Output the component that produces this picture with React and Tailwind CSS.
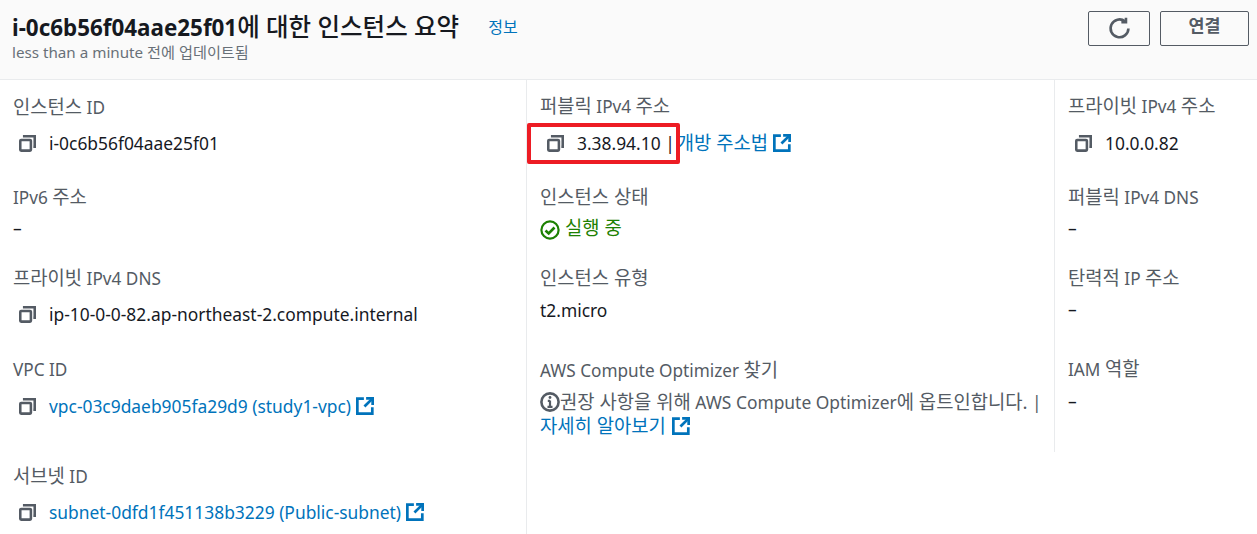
const CopyIcon = () => (
    <svg viewBox="0 0 16 16" className="w-[17px] h-[17px] shrink-0" fill="none" stroke="#545b64" strokeWidth="2.4">
        <rect x="1.2" y="4.7" width="10" height="10" rx="0.8" />
        <path d="M4.9 2.4V1.2h9.9v9.9h-1.3" />
    </svg>
);

const ExternalIcon = () => (
    <svg viewBox="0 0 16 16" className="w-[18px] h-[18px] shrink-0 inline-block" fill="none" stroke="#0073bb" strokeWidth="2.4">
        <path d="M7 1.5H1.2v13.3h13.3V9" />
        <path d="M9 1.2h5.8V7" />
        <path d="M14.8 1.2L7.5 8.5" />
    </svg>
);

// korean glyphs sit larger than the latin ones in the reference
const K = ({ children }) => <span className="text-[18.8px]">{children}</span>;

const Label = ({ children }) => <div className="text-[#545b64] text-[17.2px] h-[22px] leading-[22px]">{children}</div>;

const Copyable = ({ children, link }) => (
    <div className="flex items-center h-[22px] mt-[14px] pl-[6px]">
        <CopyIcon />
        <span className={`ml-[13px] flex items-center gap-[5px] ${link ? "text-[#0073bb]" : "text-[#16191f]"}`}>
            {children}
            {link && <ExternalIcon />}
        </span>
    </div>
);

const Plain = ({ children }) => <div className="h-[22px] leading-[22px] mt-[9px] text-[#16191f]">{children}</div>;

export default function App() {
    return (
        <div className="w-[1257px] h-[534px] overflow-hidden bg-white text-[17.4px] relative font-['Noto_Sans','Noto_Sans_CJK_KR',sans-serif]">

            {/* Header */}
            <div className="h-[80px] bg-[#fafafa] border-b border-[#e9ebed] flex justify-between pl-[12px] pr-[8px] pt-[11px]">
                <div>
                    <div className="flex items-center h-[32px]">
                        <h1 className="text-[22.4px] font-bold text-[#16191f] leading-[32px]">
                            i-0c6b56f04aae25f01<span className="font-medium text-[24.5px]">에 대한 인스턴스 요약</span>
                        </h1>
                        <span className="ml-[29px] text-[16px] text-[#0073bb]">정보</span>
                    </div>
                    <div className="text-[15.2px] leading-[18px] text-[#687078]">less than a minute 전에 업데이트됨</div>
                </div>
                <div className="flex gap-[10px]">
                    <button className="w-[62px] h-[35px] border border-[#545b64] rounded-[2px] flex items-center justify-center">
                        <svg viewBox="0 0 16 16" className="w-[23px] h-[23px]" fill="none" stroke="#545b64" strokeWidth="1.8">
                            <path d="M14.2 8A6.2 6.2 0 1 1 11.8 3" />
                            <path d="M12.5 0.5v3.2H9.3" />
                        </svg>
                    </button>
                    <button className="w-[89px] h-[35px] border border-[#545b64] rounded-[2px] text-[#545b64] font-bold pb-[6px]">연결</button>
                </div>
            </div>

            {/* Columns */}
            <div className="flex">
                <div className="w-[527px] h-[454px] border-r border-[#e9ebed] pl-[13px] pt-[16px]">
                    <Label><K>인스턴스</K> ID</Label>
                    <Copyable>i-0c6b56f04aae25f01</Copyable>

                    <div className="mt-[32px]"><Label>IPv6 <K>주소</K></Label></div>
                    <Plain>–</Plain>

                    <div className="mt-[28px]"><Label><K>프라이빗</K> IPv4 DNS</Label></div>
                    <Copyable>ip-10-0-0-82.ap-northeast-2.compute.internal</Copyable>

                    <div className="mt-[34px]"><Label>VPC ID</Label></div>
                    <Copyable link>vpc-03c9daeb905fa29d9 (study1-vpc)</Copyable>

                    <div className="mt-[48px]"><Label><K>서브넷</K> ID</Label></div>
                    <Copyable link>subnet-0dfd1f451138b3229 (Public-subnet)</Copyable>
                </div>

                <div className="w-[528px] h-[372px] border-r border-[#e9ebed] pl-[13px] pr-[12px] pt-[15px]">
                    <Label><K>퍼블릭</K> IPv4 <K>주소</K></Label>
                    <div className="flex items-center h-[22px] mt-[15px] pl-[7px] text-[#16191f]">
                        <CopyIcon />
                        <span className="ml-[13px]">3.38.94.10 |</span>
                        <span className="ml-[2px] text-[#0073bb] flex items-center gap-[5px]"><K>개방 주소법</K><ExternalIcon /></span>
                    </div>

                    <div className="mt-[32px]"><Label><K>인스턴스 상태</K></Label></div>
                    <div className="flex items-center gap-[5px] h-[22px] mt-[9px] text-[#1d8102]">
                        <svg viewBox="0 0 20 20" className="w-[20px] h-[20px] mt-[3px]" fill="none" stroke="#1d8102" strokeWidth="2.2">
                            <circle cx="10" cy="10" r="8.6" />
                            <path d="M5.5 10.5l3.2 3 5.8-6" strokeWidth="2.6" />
                        </svg>
                        <K>실행 중</K>
                    </div>

                    <div className="mt-[28px]"><Label><K>인스턴스 유형</K></Label></div>
                    <div className="pt-[1px]"><Plain>t2.micro</Plain></div>

                    <div className="mt-[38px]"><Label>AWS Compute Optimizer <K>찾기</K></Label></div>
                    <div className="mt-[9px] leading-[24px] text-[#545b64]">
                        <div className="flex items-center">
                            <svg viewBox="0 0 20 20" className="w-[20px] h-[20px] shrink-0" fill="none" stroke="#545b64" strokeWidth="2.6">
                                <circle cx="10" cy="10" r="8.6" />
                                <path d="M10 8.5v6M7.5 14.8h5M7.8 8.8h2.2" strokeWidth="2.2" />
                                <circle cx="10" cy="5.5" r="1.4" fill="#545b64" stroke="none" />
                            </svg>
                            <span className="whitespace-nowrap"><K>권장 사항을 위해</K> AWS Compute Optimizer<K>에 옵트인합니다.</K> |</span>
                        </div>
                        <div className="text-[#0073bb] flex items-center gap-[6px]"><K>자세히 알아보기</K><ExternalIcon /></div>
                    </div>
                </div>

                <div className="flex-1 pl-[13px] pt-[15px]">
                    <Label><K>프라이빗</K> IPv4 <K>주소</K></Label>
                    <div className="pt-[1px] pl-[1px]"><Copyable>10.0.0.82</Copyable></div>

                    <div className="mt-[32px]"><Label><K>퍼블릭</K> IPv4 DNS</Label></div>
                    <Plain>–</Plain>

                    <div className="mt-[28px]"><Label><K>탄력적</K> IP <K>주소</K></Label></div>
                    <Plain>–</Plain>

                    <div className="mt-[38px]"><Label>IAM <K>역할</K></Label></div>
                    <div className="pt-[1px]"><Plain>–</Plain></div>
                </div>
            </div>

            {/* Red highlight drawn over the screenshot */}
            <div className="absolute left-[527px] top-[123px] w-[153px] h-[41px] border-[4px] border-[#ed1c24] rounded-[2px]" />
        </div>
    );
}
